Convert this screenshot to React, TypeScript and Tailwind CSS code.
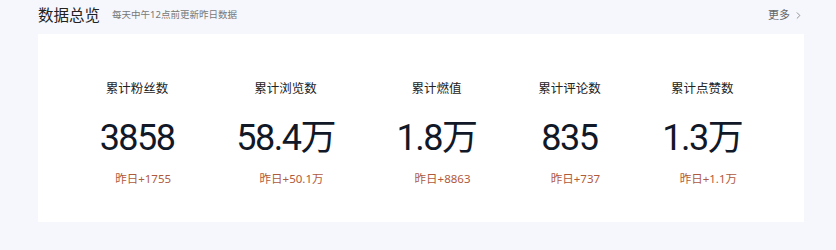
import { ChevronRight } from "lucide-react";

type Stat = {
    label: string;
    value: string;
    delta: string;
};

const stats: Stat[] = [
    { label: "累计粉丝数", value: "3858", delta: "昨日+1755" },
    { label: "累计浏览数", value: "58.4万", delta: "昨日+50.1万" },
    { label: "累计燃值", value: "1.8万", delta: "昨日+8863" },
    { label: "累计评论数", value: "835", delta: "昨日+737" },
    { label: "累计点赞数", value: "1.3万", delta: "昨日+1.1万" },
];

const StatItem = ({ stat }: { stat: Stat }) => (
    <div className="flex flex-col items-center">
        <div className="text-[12.5px] leading-[17px] text-[#222]">{stat.label}</div>
        <div
            className="mt-[23px] text-[36px] leading-[36px] tracking-[-1.5px] text-[#111827]"
            style={{ fontFamily: 'Roboto, "Noto Sans CJK SC", sans-serif' }}
        >
            {stat.value}
        </div>
        <div className="mt-[15px] pl-[12px] text-[11.5px] leading-[15px] text-[#b05a3c]">{stat.delta}</div>
    </div>
);

export default function App() {
    return (
        <div
            className="w-[836px] h-[250px] bg-[#f5f7fd] pl-[38px] pr-[32px]"
            style={{ fontFamily: '"Noto Sans", "Noto Sans CJK SC", sans-serif' }}
        >
            {/* header */}
            <div className="flex items-center h-[34px] pb-[4px]">
                <h2 className="text-[15.5px] leading-[20px] text-[#222]">数据总览</h2>
                <span className="ml-[12px] text-[9.5px] text-[#777]">每天中午12点前更新昨日数据</span>
                <button className="ml-auto flex items-center gap-[3px] text-[11px] text-[#666]">
                    更多
                    <ChevronRight size={11} strokeWidth={1.5} />
                </button>
            </div>

            {/* card */}
            <div className="bg-white h-[188px] pt-[46px] flex justify-evenly">
                {stats.map((stat, index) => (
                    <StatItem key={index} stat={stat} />
                ))}
            </div>
        </div>
    );
}
